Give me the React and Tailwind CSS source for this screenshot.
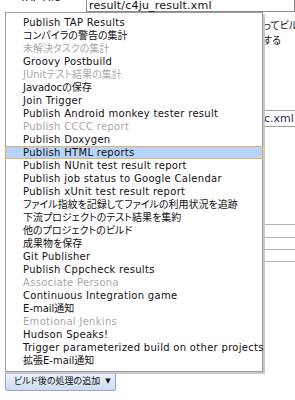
import React from "react";

const items = [
  ["Publish TAP Results", 0],
  ["コンパイラの警告の集計", 0],
  ["未解決タスクの集計", 1],
  ["Groovy Postbuild", 0],
  ["JUnitテスト結果の集計", 1],
  ["Javadocの保存", 0],
  ["Join Trigger", 0],
  ["Publish Android monkey tester result", 0],
  ["Publish CCCC report", 1],
  ["Publish Doxygen", 0],
  ["Publish HTML reports", 2],
  ["Publish NUnit test result report", 0],
  ["Publish job status to Google Calendar", 0],
  ["Publish xUnit test result report", 0],
  ["ファイル指紋を記録してファイルの利用状況を追跡", 0],
  ["下流プロジェクトのテスト結果を集約", 0],
  ["他のプロジェクトのビルド", 0],
  ["成果物を保存", 0],
  ["Git Publisher", 0],
  ["Publish Cppcheck results", 0],
  ["Associate Persona", 1],
  ["Continuous Integration game", 0],
  ["E-mail通知", 0],
  ["Emotional Jenkins", 1],
  ["Hudson Speaks!", 0],
  ["Trigger parameterized build on other projects", 0],
  ["拡張E-mail通知", 0],
];

const cjk = /[\u3000-\u9fff]/;

export default function App() {
  return (
    <div className="relative w-[295px] h-[400px] overflow-hidden bg-white text-[10px] text-[#111] font-['DejaVu_Sans','Noto_Sans_CJK_JP',sans-serif] [font-feature-settings:'palt']">
      {/* background page */}
      <div className="flex flex-col">
        <div className="flex items-end h-[12px]">
          <div className="w-[86px] pl-[20px] leading-none mb-[9px] text-[10px] tracking-[0.3px]">TAP File</div>
          <div className="h-[16px] -mt-[6px] flex-1 border border-[#8a8a8a] border-t-0 pl-[2px] leading-[11px] flex items-end text-[11px] tracking-[0.2px]">
            result/c4ju_result.xml
          </div>
        </div>
        <div className="pl-[263px] pt-[6px] text-[10px] leading-[15px] whitespace-nowrap">
          <div>ってビルド</div>
          <div>する</div>
        </div>
        <div className="pl-[262px] pt-[62px]">
          <div className="h-[17px] border-y border-[#a0a0a0] pl-[2px] text-[11px] leading-[15px] text-[#3a1a6a]">c.xml</div>
        </div>
        <div className="pl-[262px] pt-[97px] flex flex-col">
          <div className="h-[13px] border-t border-[#b0b0b0]"></div>
          <div className="h-[12px] border-t border-[#b0b0b0]"></div>
          <div className="h-[12px] border-t border-[#b0b0b0]"></div>
          <div className="h-[12px] border-t border-[#b0b0b0]"></div>
        </div>
        <div className="pl-[5px] pt-[99px]">
          <button className="flex items-center gap-[5px] h-[19px] w-[111px] pl-[8px] whitespace-nowrap border border-[#8fa8cc] rounded-[2px] bg-gradient-to-b from-[#eef3fb] to-[#cddbef] text-[9px] text-[#111]">
            <span>ビルド後の処理の追加</span>
            <span className="text-[7px]">▼</span>
          </button>
        </div>
      </div>

      {/* dropdown menu overlay */}
      <div className="absolute left-[5px] top-[12px] w-[258px] h-[360px] bg-white border border-[#9a9a9a] shadow-[2px_2px_0_#c8c8c8] pt-[3px] flex flex-col">
        {items.map(([label, state]) => {
          const sp = cjk.test(label) ? "" : " tracking-[0.3px]";
          return (
            <div
              key={label}
              className={
                (state === 2
                  ? "h-[13px] leading-[11px] pl-[17px] bg-[#b5d3fb] border border-[#e0b463] -mx-px whitespace-nowrap"
                  : state === 1
                  ? "h-[13px] leading-[13px] pl-[17px] text-[#a8a8a8] whitespace-nowrap"
                  : "h-[13px] leading-[13px] pl-[17px] whitespace-nowrap") + sp
              }
            >
              {label}
            </div>
          );
        })}
      </div>
    </div>
  );
}
